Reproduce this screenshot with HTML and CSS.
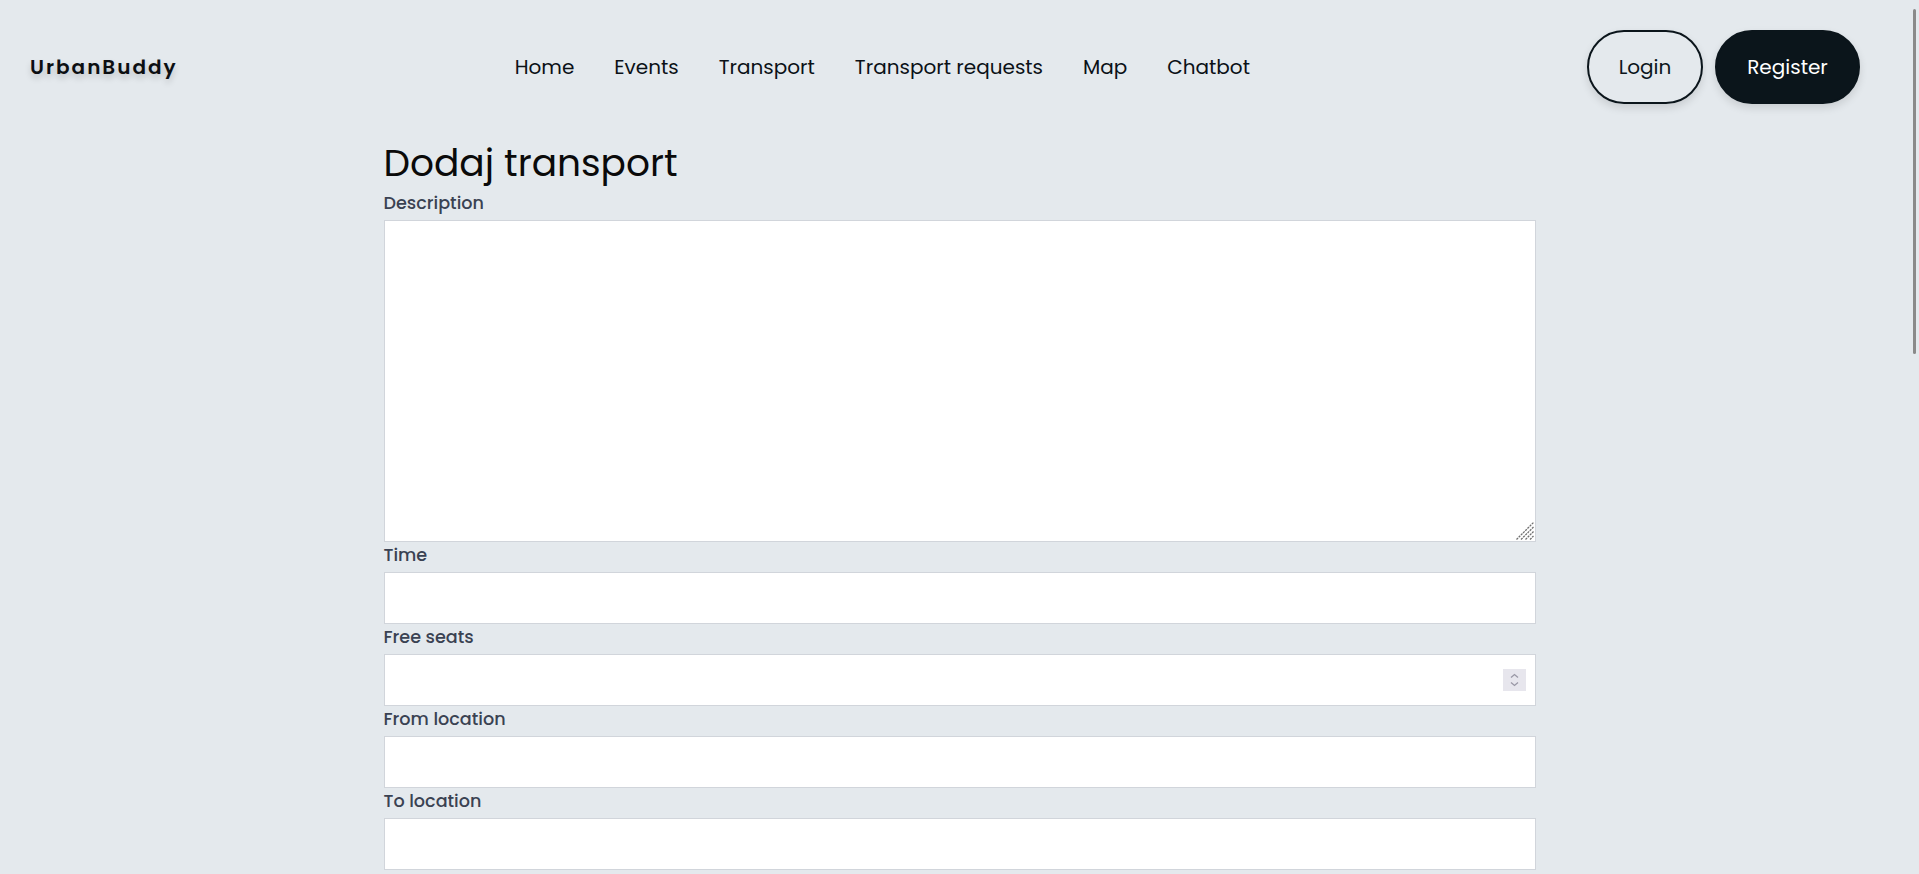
FILE: index.html
```html
<!DOCTYPE html>
<html lang="pl">
<head>
<meta charset="utf-8">
<title>UrbanBuddy - Dodaj transport</title>
<link rel="stylesheet" href="styles.css">
</head>
<body>
<header class="topbar">
  <div class="logo">UrbanBuddy</div>
  <nav class="nav">
    <a href="#">Home</a>
    <a href="#">Events</a>
    <a href="#">Transport</a>
    <a href="#">Transport requests</a>
    <a href="#">Map</a>
    <a href="#">Chatbot</a>
  </nav>
  <div class="auth">
    <button class="btn btn-outline">Login</button>
    <button class="btn btn-dark">Register</button>
  </div>
</header>
<main class="page">
  <h1 class="title">Dodaj transport</h1>
  <form class="form">
    <label class="label" for="desc">Description</label>
    <div class="wrap">
      <textarea class="field area" id="desc"></textarea>
      <svg class="resizer" width="18" height="18" viewBox="0 0 18 18" aria-hidden="true">
        <g stroke="#707070" stroke-width="1.3" stroke-dasharray="2.2 0.9" fill="none">
          <line x1="0.5" y1="17.5" x2="17.5" y2="0.5"/>
          <line x1="5" y1="17.5" x2="17.5" y2="5"/>
          <line x1="9.5" y1="17.5" x2="17.5" y2="9.5"/>
          <line x1="14" y1="17.5" x2="17.5" y2="14"/>
        </g>
      </svg>
    </div>
    <label class="label" for="time">Time</label>
    <input class="field" id="time" type="text">
    <label class="label" for="seats">Free seats</label>
    <div class="wrap">
      <input class="field" id="seats" type="number">
      <svg class="spinner" width="23" height="22" viewBox="0 0 23 22" aria-hidden="true">
        <rect width="23" height="22" fill="#e7e6ed"/>
        <polyline points="8,8.5 11.5,5.5 15,8.5" fill="none" stroke="#9a98a6" stroke-width="1.3"/>
        <polyline points="8,13.5 11.5,16.5 15,13.5" fill="none" stroke="#9a98a6" stroke-width="1.3"/>
      </svg>
    </div>
    <label class="label" for="from">From location</label>
    <input class="field" id="from" type="text">
    <label class="label" for="to">To location</label>
    <input class="field" id="to" type="text">
  </form>
</main>
<div class="scroll-thumb"></div>
</body>
</html>
```

FILE: styles.css
```css
html, body {
  margin: 0;
  padding: 0;
  height: 100%;
  overflow: hidden;
}
body {
  background: #e4e9ed;
  font-family: "Poppins", "Open Sans", "DejaVu Sans", sans-serif;
  color: #0b1117;
}
.topbar {
  display: flex;
  justify-content: space-between;
  align-items: center;
  padding: 30px 59px 0 30px;
}
.logo {
  font-size: 20px;
  font-weight: 600;
  letter-spacing: 2px;
  color: #0c0f12;
  text-shadow: 0 4px 6px rgba(0, 0, 0, 0.18);
}
.nav {
  display: flex;
  gap: 40px;
}
.nav a {
  font-size: 20px;
  color: #0b1117;
  text-decoration: none;
}
.auth {
  display: flex;
  gap: 12px;
}
.btn {
  font-family: inherit;
  font-size: 20px;
  height: 74px;
  border-radius: 999px;
  box-shadow: 0 4px 8px rgba(0, 0, 0, 0.12);
  cursor: pointer;
}
.btn-outline {
  width: 116px;
  background: transparent;
  border: 2px solid #0b151b;
  color: #0b151b;
}
.btn-dark {
  width: 145px;
  background: #0b151b;
  border: 2px solid #0b151b;
  color: #ffffff;
}
.page {
  width: 1152px;
  margin: 0 auto;
}
.title {
  font-size: 37.5px;
  font-weight: 400;
  line-height: 40px;
  margin: 39px 0 7px;
  color: #0a0a0a;
}
.form {
  display: flex;
  flex-direction: column;
}
.label {
  display: block;
  font-size: 17.6px;
  font-weight: 500;
  line-height: 26px;
  margin-bottom: 4px;
  color: #3a4252;
}
.wrap {
  position: relative;
}
.field {
  display: block;
  box-sizing: border-box;
  width: 100%;
  height: 52px;
  margin: 0;
  padding: 1px 40px 1px 2px;
  border: 1px solid #d1d5db;
  background: #ffffff;
  font-family: inherit;
  font-size: 16px;
  outline: none;
}
.field::-webkit-inner-spin-button,
.field::-webkit-outer-spin-button {
  -webkit-appearance: none;
  margin: 0;
}
.area {
  height: 322px;
  resize: none;
}
.resizer {
  position: absolute;
  right: 2px;
  bottom: 2px;
  pointer-events: none;
}
.spinner {
  position: absolute;
  right: 10px;
  top: 15px;
  pointer-events: none;
}
.scroll-thumb {
  position: fixed;
  top: 9px;
  right: 3px;
  width: 3px;
  height: 345px;
  background: #8a8a8a;
  border-radius: 2px;
}
```
